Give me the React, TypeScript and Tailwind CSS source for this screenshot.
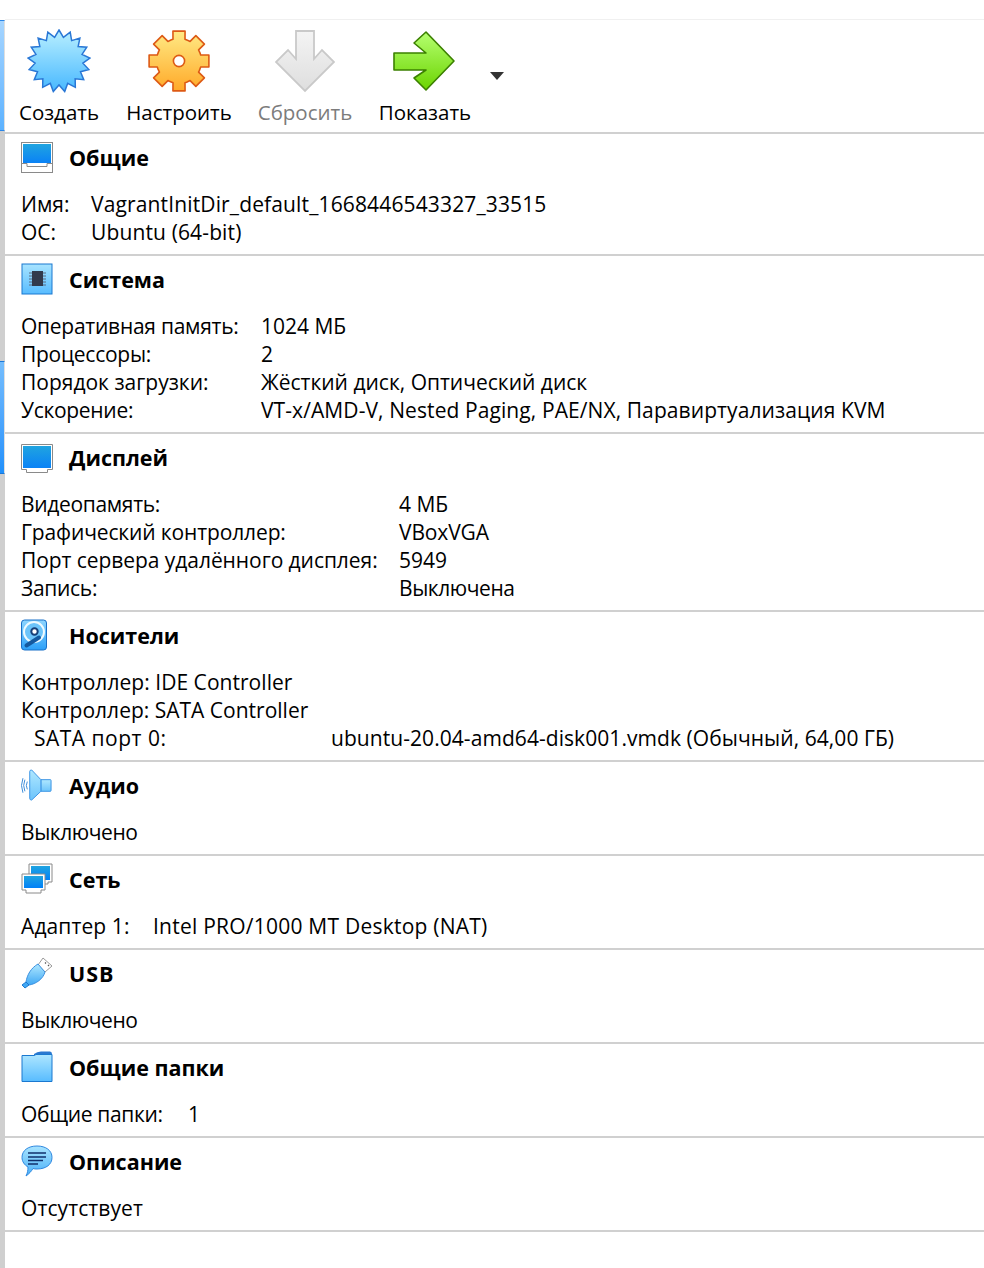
const F = "[font-family:'Open_Sans','Noto_Sans',sans-serif]";

function Star() {
  const pts: string[] = [];
  const n = 17;
  for (let i = 0; i < n * 2; i++) {
    const r = i % 2 === 0 ? 31 : 24;
    const a = (Math.PI * i) / n - Math.PI / 2;
    pts.push(`${32 + r * Math.cos(a)},${32 + r * Math.sin(a)}`);
  }
  return (
    <svg width="64" height="64" viewBox="0 0 64 64">
      <defs>
        <linearGradient id="st" x1="0" y1="0" x2="0" y2="1">
          <stop offset="0" stopColor="#b8efff" />
          <stop offset="1" stopColor="#48b8ff" />
        </linearGradient>
      </defs>
      <polygon points={pts.join(" ")} fill="url(#st)" stroke="#2a78d6" strokeWidth="1.5" />
    </svg>
  );
}

function Gear() {
  const pts: string[] = [];
  const n = 8;
  for (let i = 0; i < n; i++) {
    const c = (i * 2 * Math.PI) / n - Math.PI / 2;
    const d = 0.2;
    const e = 0.27;
    [
      [22.5, c - 0.393 + 0.05],
      [22.5, c - e],
      [30.5, c - d],
      [30.5, c + d],
      [22.5, c + e],
    ].forEach(([r, a]) => pts.push(`${31 + r * Math.cos(a)},${31 + r * Math.sin(a)}`));
  }
  return (
    <svg width="62" height="62" viewBox="0 0 62 62">
      <defs>
        <linearGradient id="ge" x1="0" y1="0" x2="0" y2="1">
          <stop offset="0" stopColor="#ffea85" />
          <stop offset="1" stopColor="#ffa928" />
        </linearGradient>
      </defs>
      <polygon points={pts.join(" ")} fill="url(#ge)" stroke="#dd5a14" strokeWidth="1.6" strokeLinejoin="round" />
      <circle cx="31" cy="31" r="5.6" fill="#fff" stroke="#dd5a14" strokeWidth="1.6" />
    </svg>
  );
}

function DownArrow() {
  return (
    <svg width="60" height="64" viewBox="0 0 60 64">
      <defs>
        <linearGradient id="da" x1="0" y1="0" x2="0" y2="1">
          <stop offset="0" stopColor="#f4f4f4" />
          <stop offset="1" stopColor="#dedede" />
        </linearGradient>
      </defs>
      <path d="M21 2H39V30L47 21L59 33L30 62L1 33L13 21L21 30Z" fill="url(#da)" stroke="#c9c9c9" strokeWidth="1.8" strokeLinejoin="miter" />
    </svg>
  );
}

function RightArrow() {
  return (
    <svg width="64" height="62" viewBox="0 0 64 62">
      <defs>
        <linearGradient id="ra" x1="0" y1="0" x2="0" y2="1">
          <stop offset="0" stopColor="#b5ff70" />
          <stop offset="1" stopColor="#6bd400" />
        </linearGradient>
      </defs>
      <path d="M1 23H33L21 13L33 2L61 31L33 60L21 48L33 40H1Z" fill="url(#ra)" stroke="#3b8000" strokeWidth="1.6" strokeLinejoin="round" />
    </svg>
  );
}

function Tray() {
  return (
    <svg width="32" height="32" viewBox="0 0 32 32">
      <defs>
        <linearGradient id="tr" x1="0" y1="0" x2="0" y2="1">
          <stop offset="0" stopColor="#20a4e0" />
          <stop offset="1" stopColor="#0a82f6" />
        </linearGradient>
      </defs>
      <rect x="0.5" y="1.5" width="31" height="30" fill="#fff" stroke="#8a8a8a" />
      <rect x="2" y="3" width="28" height="19" fill="url(#tr)" />
      <path d="M1 22.5H6V25.5H26V22.5H31" fill="none" stroke="#8a8a8a" />
    </svg>
  );
}

function Screen() {
  return (
    <svg width="32" height="32" viewBox="0 0 32 32">
      <defs>
        <linearGradient id="mo" x1="0" y1="0" x2="0" y2="1">
          <stop offset="0" stopColor="#20a4e0" />
          <stop offset="1" stopColor="#0a82f6" />
        </linearGradient>
      </defs>
      <path d="M0.5 3.5H31.5V28.5H26.5V31.5H5.5V28.5H0.5Z" fill="#fff" stroke="#8a8a8a" />
      <rect x="2" y="5" width="28" height="22" fill="url(#mo)" />
    </svg>
  );
}

function Chip() {
  return (
    <svg width="32" height="32" viewBox="0 0 32 32">
      <defs>
        <linearGradient id="ch" x1="0" y1="0" x2="0" y2="1">
          <stop offset="0" stopColor="#a8e4ff" />
          <stop offset="1" stopColor="#58bcff" />
        </linearGradient>
      </defs>
      <rect x="1" y="1" width="30" height="30" fill="url(#ch)" stroke="#1a78d0" strokeWidth="1" />
      <rect x="11" y="8" width="11" height="15" fill="#323a4c" />
      <path d="M8 10H11M8 13H11M8 16H11M8 19H11M8 22H11M22 10H25M22 13H25M22 16H25M22 19H25M22 22H25" stroke="#5a6a80" strokeWidth="1" />
    </svg>
  );
}

function Disk() {
  return (
    <svg width="28" height="32" viewBox="0 0 28 32">
      <defs>
        <linearGradient id="di" x1="0" y1="0" x2="0" y2="1">
          <stop offset="0" stopColor="#8ed6ff" />
          <stop offset="1" stopColor="#2ca0f8" />
        </linearGradient>
      </defs>
      <rect x="0.5" y="1" width="25" height="30" rx="3" fill="url(#di)" stroke="#1a70c8" strokeWidth="1" />
      <circle cx="13" cy="13" r="10" fill="#6cc4fa" stroke="#eefaff" strokeWidth="2" />
      <circle cx="13.5" cy="12.5" r="3.2" fill="#fff" stroke="#173f78" strokeWidth="2" />
      <path d="M5.5 26.5L18 18.5" stroke="#14599f" strokeWidth="4" strokeLinecap="round" />
    </svg>
  );
}

function Speaker() {
  return (
    <svg width="32" height="32" viewBox="0 0 32 33">
      <defs>
        <linearGradient id="sp" x1="0" y1="0" x2="0" y2="1">
          <stop offset="0" stopColor="#b0e8ff" />
          <stop offset="1" stopColor="#6cc4fb" />
        </linearGradient>
      </defs>
      <path d="M20 11H30Q30.5 11 30.5 12V22Q30.5 23 30 23H20Z" fill="url(#sp)" stroke="#3a94e4" strokeWidth="1" />
      <path d="M8.5 2.5Q8.5 1 10.5 1L20 11V23L10.5 32Q8.5 32 8.5 30.5Z" fill="url(#sp)" stroke="#3a94e4" strokeWidth="1" strokeLinejoin="round" />
      <path d="M6 13Q4 17 6 21M3.5 11Q1 17 3.5 23M1.5 9.5Q-1.5 17 1.5 24.5" fill="none" stroke="#3a8ad8" strokeWidth="1" />
    </svg>
  );
}

function Net() {
  return (
    <svg width="32" height="32" viewBox="0 0 32 32">
      <defs>
        <linearGradient id="ne" x1="0" y1="0" x2="0" y2="1">
          <stop offset="0" stopColor="#20a4e0" />
          <stop offset="1" stopColor="#0080f8" />
        </linearGradient>
      </defs>
      <path d="M8 1H31V19H27V21H21V19H8Z" fill="#fff" stroke="#8a8a8a" />
      <rect x="10" y="3" width="19" height="14" fill="url(#ne)" />
      <path d="M1 11H24V27H20V30H5V27H1Z" fill="#fff" stroke="#8a8a8a" />
      <rect x="3" y="13" width="19" height="12" fill="url(#ne)" />
    </svg>
  );
}

function Usb() {
  return (
    <svg width="32" height="32" viewBox="0 0 32 32">
      <defs>
        <linearGradient id="us" x1="0" y1="0" x2="0" y2="1">
          <stop offset="0" stopColor="#b0e8ff" />
          <stop offset="1" stopColor="#40a8f4" />
        </linearGradient>
      </defs>
      <path d="M22 1L31 9L24 15L17 8Z" fill="#fff" stroke="#9a9a9a" />
      <path d="M24 5.5L25 6.5M27 8L28 9" stroke="#555" strokeWidth="1.2" />
      <path d="M17 7L24 15C22 22 15 27 8 28L5 25C6 18 10 11 17 7Z" fill="url(#us)" stroke="#3a90e0" />
      <path d="M5 25L8 28L4 31L1 28Z" fill="#40a8f4" stroke="#1a78d0" />
    </svg>
  );
}

function Folder() {
  return (
    <svg width="32" height="32" viewBox="0 0 32 32">
      <defs>
        <linearGradient id="fo" x1="0" y1="0" x2="0" y2="1">
          <stop offset="0" stopColor="#aee6ff" />
          <stop offset="1" stopColor="#58bcff" />
        </linearGradient>
      </defs>
      <path d="M13 3Q16 0.5 20 0.5H29Q31 0.5 31 3V6H13Z" fill="#2a78d0" />
      <path d="M1 4.5H13L15 3.5H31V30.5H1Z" fill="url(#fo)" stroke="#1a78d0" strokeWidth="1" />
    </svg>
  );
}

function Bubble() {
  return (
    <svg width="32" height="32" viewBox="0 0 32 32">
      <defs>
        <linearGradient id="bu" x1="0" y1="0" x2="0" y2="1">
          <stop offset="0" stopColor="#a8e4ff" />
          <stop offset="1" stopColor="#4ab0f8" />
        </linearGradient>
      </defs>
      <path d="M16 1C25 1 31 5.5 31 12.5C31 19.5 25 24 16 24C14.5 24 13 24 12 23.5C10.5 26 8 29 5 31C6.5 28 7 25.5 7 22C3.5 20 1 16.5 1 12.5C1 5.5 7 1 16 1Z" fill="url(#bu)" stroke="#2f88e0" />
      <path d="M7 8H25M7 12H25M7 15.5H22M7 19H17" stroke="#10306c" strokeWidth="1.6" />
    </svg>
  );
}

function Tool({ icon, label, muted, pl }: { icon: React.ReactNode; label: string; muted?: boolean; pl: string }) {
  return (
    <div className={`flex flex-col items-center ${pl}`}>
      <div className="flex h-[64px] items-center justify-center">{icon}</div>
      <div className={`mt-[4px] h-[30px] whitespace-nowrap text-[20.5px] leading-[30px] ${muted ? "text-[#7c7c7c]" : "text-black"}`}>{label}</div>
    </div>
  );
}

function Section({
  icon,
  title,
  h,
  tt = "",
  children,
}: {
  icon: React.ReactNode;
  title: string;
  h: string;
  tt?: string;
  children: React.ReactNode;
}) {
  return (
    <section className={`${h} border-b-2 border-[#d0d0d0] pl-[16px] pt-[7px]`}>
      <div className="flex h-[32px] items-center">
        <div className="flex w-[48px] items-center">{icon}</div>
        <div className={`pt-[2px] text-[21.5px] font-bold leading-[32px] ${tt}`}>{title}</div>
      </div>
      <div className="mt-[17px]">{children}</div>
    </section>
  );
}

function Row({ k, v, w, kt = "", vt = "" }: { k: string; v?: string; w: string; kt?: string; vt?: string }) {
  return (
    <div className="flex h-[28px] whitespace-nowrap text-[21px] leading-[28px]">
      <div className={`${w} ${kt}`}>{k}</div>
      {v ? <div className={vt}>{v}</div> : null}
    </div>
  );
}

export default function App() {
  return (
    <div className={`flex min-h-[1268px] w-[984px] bg-white text-black ${F}`}>
      <div className="flex w-[5px] shrink-0 flex-col">
        <div className="h-[20px] bg-white" />
        <div className="h-[111px] border-y border-r border-y-[#2a86e8] border-r-[#dedede] bg-gradient-to-b from-[#a6d5ff] to-[#5cb2ff]" />
        <div className="h-[230px] bg-[#cfcfcf]" />
        <div className="h-[113px] border-y border-r border-y-[#1a78d8] border-r-[#dedede] bg-gradient-to-b from-[#74bdfd] to-[#1f90fb]" />
        <div className="flex-1 bg-[#cfcfcf]" />
      </div>
      <main className="min-w-0 flex-1">
        <div className="h-[20px] border-b border-[#f0f0f0]" />
        <div className="flex h-[114px] items-start border-b-2 border-[#d0d0d0] pt-[9px]">
          <Tool pl="ml-[14px] w-[80px]" icon={<Star />} label="Создать" />
          <Tool pl="ml-[28px] w-[104px]" icon={<Gear />} label="Настроить" />
          <Tool pl="ml-[27px] w-[94px]" icon={<DownArrow />} label="Сбросить" muted />
          <Tool pl="ml-[27px] w-[92px]" icon={<RightArrow />} label="Показать" />
          <div className="ml-[19px] mt-[43px] h-0 w-0 border-x-[7px] border-t-[8px] border-x-transparent border-t-[#333]" />
        </div>
        <div>
          <Section h="h-[122px]" icon={<Tray />} title="Общие">
            <Row w="w-[70px]" k="Имя:" v="VagrantInitDir_default_1668446543327_33515" vt="tracking-[0.14px]" />
            <Row w="w-[70px]" k="ОС:" v="Ubuntu (64-bit)" vt="tracking-[0.13px]" />
          </Section>
          <Section h="h-[178px]" icon={<Chip />} title="Система">
            <Row w="w-[240px]" k="Оперативная память:" v="1024 МБ" kt="tracking-[-0.26px]" />
            <Row w="w-[240px]" k="Процессоры:" v="2" kt="tracking-[-0.27px]" />
            <Row w="w-[240px]" k="Порядок загрузки:" v="Жёсткий диск, Оптический диск" />
            <Row w="w-[240px]" k="Ускорение:" v="VT-x/AMD-V, Nested Paging, PAE/NX, Паравиртуализация KVM" kt="tracking-[-0.3px]" vt="tracking-[0.09px]" />
          </Section>
          <Section h="h-[178px]" icon={<Screen />} title="Дисплей">
            <Row w="w-[378px]" k="Видеопамять:" v="4 МБ" kt="tracking-[-0.33px]" />
            <Row w="w-[378px]" k="Графический контроллер:" v="VBoxVGA" kt="tracking-[-0.13px]" vt="tracking-[-0.14px]" />
            <Row w="w-[378px]" k="Порт сервера удалённого дисплея:" v="5949" kt="tracking-[-0.06px]" />
            <Row w="w-[378px]" k="Запись:" v="Выключена" kt="tracking-[-0.3px]" vt="tracking-[-0.44px]" />
          </Section>
          <Section h="h-[150px]" icon={<Disk />} title="Носители">
            <Row w="w-auto" k="Контроллер: IDE Controller" kt="tracking-[0.04px]" />
            <Row w="w-auto" k="Контроллер: SATA Controller" />
            <Row w="w-[310px] pl-[13px]" k="SATA порт 0:" v="ubuntu-20.04-amd64-disk001.vmdk (Обычный, 64,00 ГБ)" kt="tracking-[0.5px]" vt="tracking-[0.06px]" />
          </Section>
          <Section h="h-[94px]" icon={<Speaker />} title="Аудио">
            <Row w="w-auto" k="Выключено" kt="tracking-[-0.44px]" />
          </Section>
          <Section h="h-[94px]" icon={<Net />} title="Сеть">
            <Row w="w-[132px]" k="Адаптер 1:" v="Intel PRO/1000 MT Desktop (NAT)" kt="tracking-[0.1px]" vt="tracking-[0.23px]" />
          </Section>
          <Section h="h-[94px]" icon={<Usb />} title="USB" tt="tracking-[1px]">
            <Row w="w-auto" k="Выключено" kt="tracking-[-0.44px]" />
          </Section>
          <Section h="h-[94px]" icon={<Folder />} title="Общие папки">
            <Row w="w-[167px]" k="Общие папки:" v="1" kt="tracking-[-0.33px]" />
          </Section>
          <Section h="h-[94px]" icon={<Bubble />} title="Описание">
            <Row w="w-auto" k="Отсутствует" kt="tracking-[0.1px]" />
          </Section>
        </div>
      </main>
    </div>
  );
}
